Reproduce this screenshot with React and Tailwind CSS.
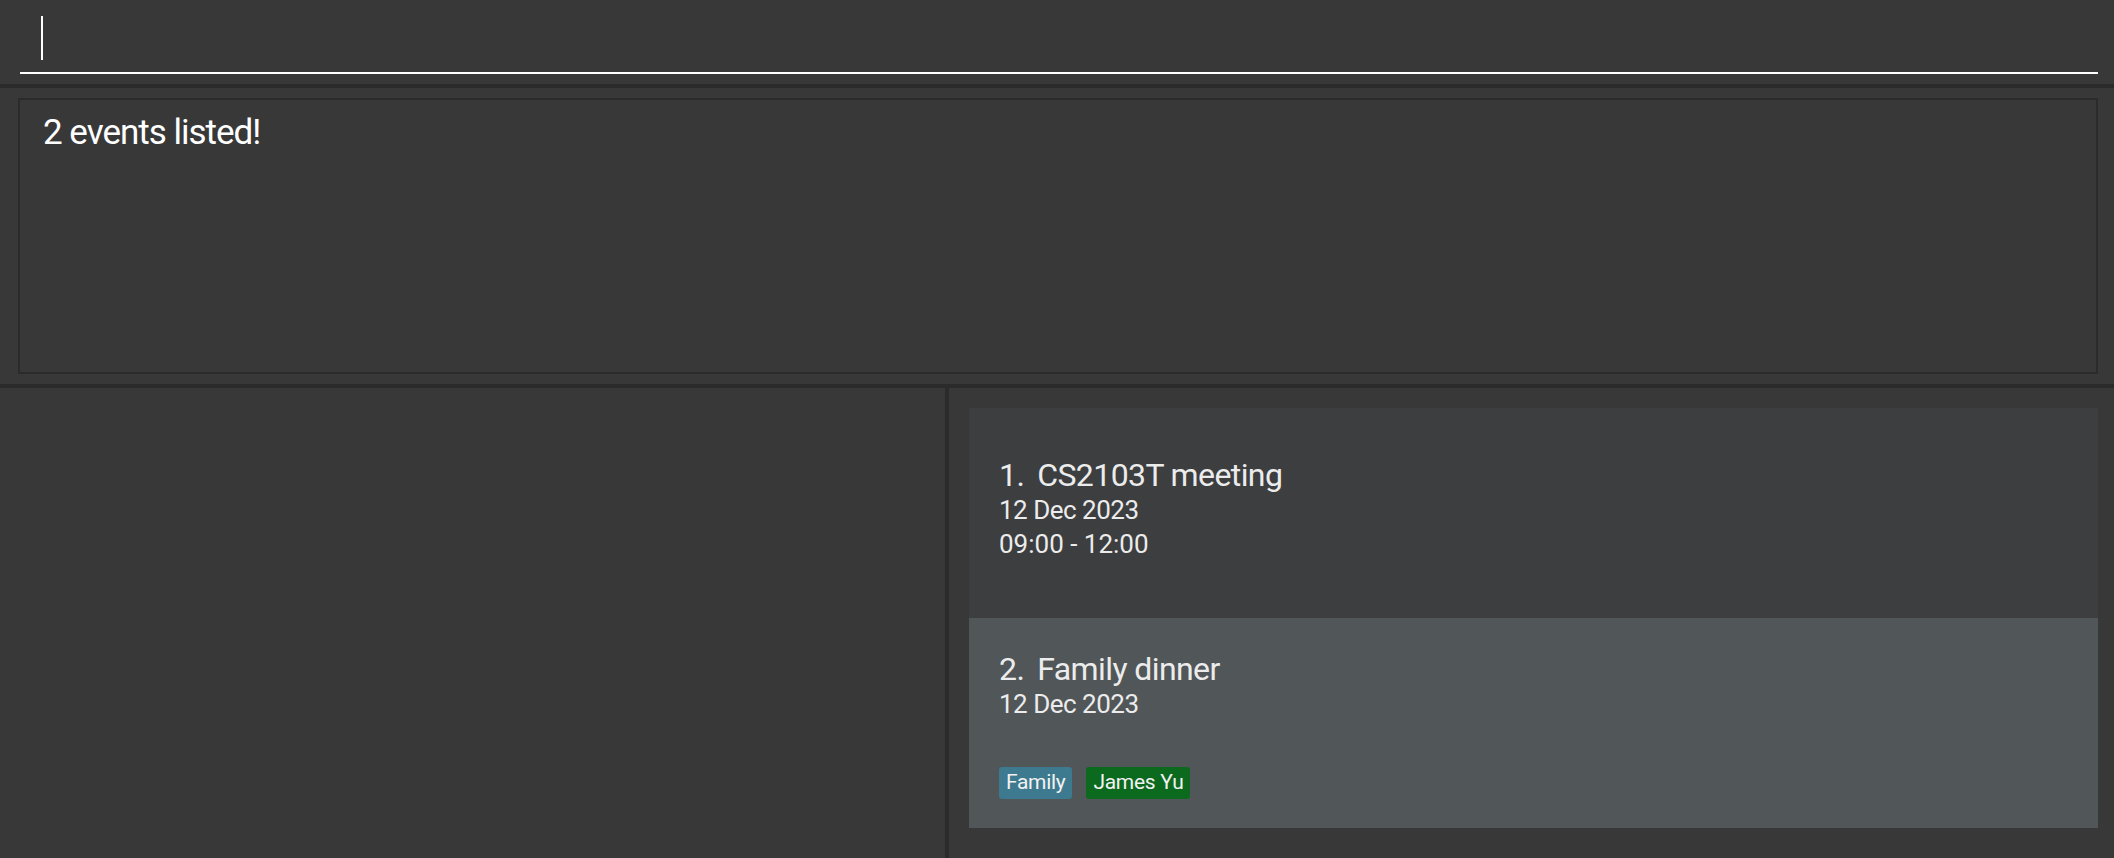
const events = [
  {
    id: 1,
    name: "CS2103T meeting",
    date: "12 Dec 2023",
    time: "09:00 - 12:00",
    tags: [],
    bg: "bg-[#3c3e3f]",
  },
  {
    id: 2,
    name: "Family dinner",
    date: "12 Dec 2023",
    time: "",
    tags: [
      { label: "Family", color: "bg-[#3e7a8f]" },
      { label: "James Yu", color: "bg-[#0b6a1e]" },
    ],
    bg: "bg-[#515658]",
  },
];

function EventCard({ index, event }) {
  return (
    <div className={`${event.bg} h-[210px] flex flex-col justify-center pt-[4px] pl-[30px] text-[#ececec]`}>
      <div className="flex gap-[13px] text-[32px] leading-[36px] tracking-[-0.6px]">
        <span>{index}.</span>
        <span>{event.name}</span>
      </div>
      <div className="text-[26px] leading-[34px] tracking-[-0.5px]">{event.date}</div>
      <div className="h-[34px] text-[26px] leading-[34px]">{event.time}</div>
      <div className="mt-[12px] flex gap-[14px]">
        {event.tags.map((tag) => (
          <span
            key={tag.label}
            className={`${tag.color} h-[32px] px-[7px] rounded-[3px] flex items-center text-[21px] tracking-[-0.3px] text-[#f2f2f2]`}
          >
            {tag.label}
          </span>
        ))}
      </div>
    </div>
  );
}

export default function App() {
  return (
    <div className="h-[858px] w-full bg-[#383838] flex flex-col font-[Roboto,sans-serif] overflow-hidden">
      {/* command box */}
      <div className="h-[84px] pl-[20px] pr-[16px] pt-[16px]">
        <div className="h-[44px] pl-[21px]">
          <div className="w-[1.5px] h-full bg-white"></div>
        </div>
        <div className="mt-[12px] h-[2px] bg-white"></div>
      </div>

      <div className="h-[4px] bg-[#2b2b2b]"></div>

      {/* result display */}
      <div className="h-[296px] pt-[10px] pb-[10px] pl-[18px] pr-[16px] flex">
        <div className="flex-1 border-2 border-[#2b2b2b] pl-[23px] pt-[13px]">
          <p className="text-white text-[35px] leading-[40px] tracking-[-1px]">2 events listed!</p>
        </div>
      </div>

      <div className="h-[4px] bg-[#2b2b2b]"></div>

      {/* main panes */}
      <div className="flex-1 flex">
        <div className="w-[945px]"></div>
        <div className="w-[4px] bg-[#2b2b2b]"></div>
        <div className="flex-1 pt-[20px] pl-[20px] pr-[16px]">
          {events.map((ev, i) => (
            <EventCard key={ev.id} index={i + 1} event={ev} />
          ))}
        </div>
      </div>
    </div>
  );
}
